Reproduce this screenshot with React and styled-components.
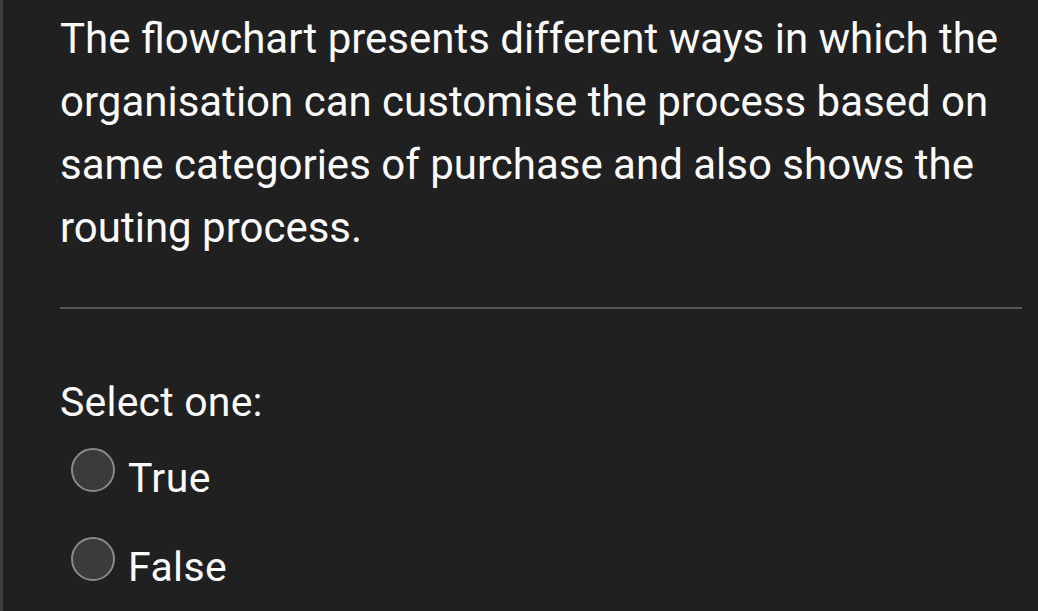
import React from "react";
import styled, { createGlobalStyle } from "styled-components";

const Global = createGlobalStyle`
  html, body { margin: 0; padding: 0; background: #202020; }
  body { font-family: Roboto, "Noto Sans", sans-serif; }
`;

const Page = styled.div`
  min-height: 611px;
  box-sizing: border-box;
  border-left: 3px solid #3e3e3e;
  padding: 7px 16px 0 57px;
  color: #fafafa;
  overflow: hidden;
`;

const Question = styled.p`
  margin: 0;
  font-size: 42px;
  line-height: 63px;
  font-weight: 400;
`;

const Divider = styled.hr`
  margin: 48px 0 0;
  border: 0;
  height: 2px;
  background: #575757;
`;

const Prompt = styled.div`
  margin-top: 62px;
  font-size: 41px;
  line-height: 63px;
  letter-spacing: 0.2px;
`;

const Options = styled.div`
  display: flex;
  flex-direction: column;
  padding-left: 11px;
`;

const Option = styled.label`
  display: flex;
  align-items: center;
  height: 89px;
  gap: 13px;
  cursor: pointer;
`;

const Radio = styled.span`
  width: 40px;
  height: 40px;
  flex: none;
  border-radius: 50%;
  border: 2.5px solid #8a8a8a;
  background: #3b3b3b;
  margin-bottom: 18px;
`;

const OptionText = styled.span`
  font-size: 41px;
  line-height: 63px;
  letter-spacing: 0.4px;
`;

export default function App() {
  return (
    <>
      <Global />
      <Page>
        <Question>
          The flowchart presents different ways in which the organisation can
          customise the process based on same categories of purchase and also
          shows the routing process.
        </Question>
        <Divider />
        <Prompt>Select one:</Prompt>
        <Options>
          <Option>
            <Radio />
            <OptionText>True</OptionText>
          </Option>
          <Option>
            <Radio />
            <OptionText>False</OptionText>
          </Option>
        </Options>
      </Page>
    </>
  );
}
